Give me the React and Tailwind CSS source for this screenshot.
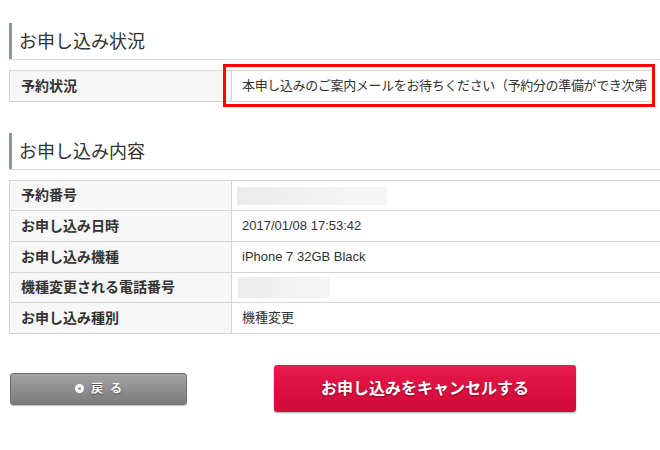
import React from "react";

const font = { fontFamily: '"Liberation Sans", "Noto Sans CJK JP", sans-serif' };

function Heading({ children, className = "" }) {
  return (
    <div className={`h-[37px] border-b border-[#d9d9d9] ${className}`}>
      <div className="h-[36px] border-l-[3px] border-[#8b96a0] pl-[7px] pt-[2px] text-[18px] leading-[34px] text-[#333]">
        {children}
      </div>
    </div>
  );
}

function Blur({ w, h }) {
  return (
    <div
      className="rounded-[1px] bg-gradient-to-r from-[#ebebeb] via-[#f1f1f1] to-[#f6f6f6]"
      style={{ width: w, height: h }}
    />
  );
}

const rows = [
  { label: "予約番号", h: "h-[30px]", value: <div className="-ml-[5px]"><Blur w={150} h={18} /></div> },
  { label: "お申し込み日時", h: "h-[31px]", value: "2017/01/08 17:53:42" },
  { label: "お申し込み機種", h: "h-[31px]", value: "iPhone 7 32GB Black" },
  { label: "機種変更される電話番号", h: "h-[30px]", value: <div className="-ml-[4px]"><Blur w={92} h={21} /></div> },
  { label: "お申し込み種別", h: "h-[31px]", value: "機種変更" },
];

export default function App() {
  return (
    <div className="relative w-full h-[450px] overflow-hidden bg-white" style={font}>
      <div className="w-[720px] pl-[9px] pt-[23px]">
        <Heading>お申し込み状況</Heading>

        <div className="mt-[10px] w-[643px] border-t border-b border-l border-[#d5d5d5]">
          <div className="grid grid-cols-[222px_1fr] h-[30px]">
            <div className="bg-[#f7f7f7] border-r border-[#d5d5d5] pl-[11px] flex items-center text-[14px] font-bold text-[#333]">
              予約状況
            </div>
            <div className="pl-[10px] flex items-center text-[13px] tracking-[-0.35px] text-[#333] whitespace-nowrap">
              本申し込みのご案内メールをお待ちください（予約分の準備ができ次第
            </div>
          </div>
        </div>

        <Heading className="mt-[31px]">お申し込み内容</Heading>

        <div className="mt-[10px] border-t border-l border-[#d5d5d5]">
          {rows.map((r) => (
            <div key={r.label} className={`grid grid-cols-[222px_1fr] border-b border-[#d5d5d5] ${r.h}`}>
              <div className="bg-[#f7f7f7] border-r border-[#d5d5d5] pl-[11px] flex items-center text-[14px] font-bold text-[#333]">
                {r.label}
              </div>
              <div className="pl-[10px] flex items-center text-[13px] text-[#333] whitespace-nowrap">
                {r.value}
              </div>
            </div>
          ))}
        </div>

        <div className="mt-[31px] flex items-center">
          <button className="ml-[1px] w-[177px] h-[32px] rounded-[3px] border border-[#6f6f6f] bg-gradient-to-b from-[#a3a3a3] to-[#7b7b7b] flex items-center justify-center gap-[7px] text-white text-[12px] font-bold tracking-[7px] [text-shadow:0_1px_1px_rgba(0,0,0,0.5)] shadow-[0_1px_1px_rgba(0,0,0,0.25)]">
            <svg width="9" height="9" viewBox="0 0 9 9">
              <circle cx="4.5" cy="4.5" r="4.5" fill="#fff" />
              <path d="M2.6 4.5 L5.6 2.7 L5.6 6.3 Z" fill="#808080" />
            </svg>
            <span className="-mr-[7px]">戻る</span>
          </button>
          <button className="ml-[87px] w-[302px] h-[47px] rounded-[3px] bg-gradient-to-b from-[#e81c4d] via-[#dc1040] to-[#d00b3a] flex items-center justify-center text-white text-[16px] font-bold [text-shadow:0_1px_2px_rgba(0,0,0,0.45)] shadow-[0_1px_2px_rgba(0,0,0,0.35)]">
            お申し込みをキャンセルする
          </button>
        </div>
      </div>

      <div className="absolute left-[223px] top-[64px] w-[432px] h-[43px] border-[3px] border-[#ff0000] pointer-events-none" />
    </div>
  );
}
